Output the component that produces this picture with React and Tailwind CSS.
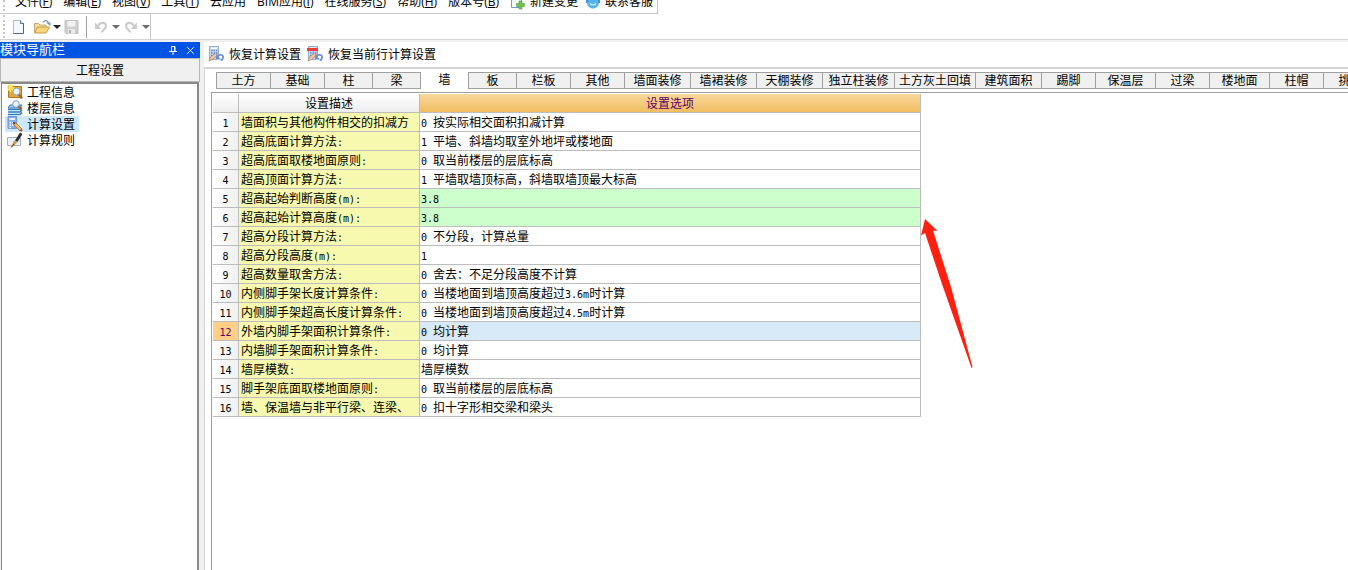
import { useState } from 'react';

const MENUS = [
  ['文件', 'F'],
  ['编辑', 'E'],
  ['视图', 'V'],
  ['工具', 'T'],
  ['云应用'],
  ['BIM应用', 'I'],
  ['在线服务', 'S'],
  ['帮助', 'H'],
  ['版本号', 'B'],
];

const TABS = [
  { name: '土方', width: 'w-[55px]' },
  { name: '基础', width: 'w-[54px]' },
  { name: '柱', width: 'w-[48px]' },
  { name: '梁', width: 'w-[48px]' },
  { name: '墙', width: 'w-[48px]' },
  { name: '板', width: 'w-[48px]' },
  { name: '栏板', width: 'w-[54px]' },
  { name: '其他', width: 'w-[54px]' },
  { name: '墙面装修', width: 'w-[66px]' },
  { name: '墙裙装修', width: 'w-[66px]' },
  { name: '天棚装修', width: 'w-[66px]' },
  { name: '独立柱装修', width: 'w-[72px]' },
  { name: '土方灰土回填', width: 'w-[81px]' },
  { name: '建筑面积', width: 'w-[66px]' },
  { name: '踢脚', width: 'w-[54px]' },
  { name: '保温层', width: 'w-[60px]' },
  { name: '过梁', width: 'w-[54px]' },
  { name: '楼地面', width: 'w-[60px]' },
  { name: '柱帽', width: 'w-[54px]' },
  { name: '挑檐', width: 'w-[54px]' },
];

const ROWS = [
  ['墙面积与其他构件相交的扣减方', '0 按实际相交面积扣减计算'],
  ['超高底面计算方法:', '1 平墙、斜墙均取室外地坪或楼地面'],
  ['超高底面取楼地面原则:', '0 取当前楼层的层底标高'],
  ['超高顶面计算方法:', '1 平墙取墙顶标高，斜墙取墙顶最大标高'],
  ['超高起始判断高度(m):', '3.8'],
  ['超高起始计算高度(m):', '3.8'],
  ['超高分段计算方法:', '0 不分段，计算总量'],
  ['超高分段高度(m):', '1'],
  ['超高数量取舍方法:', '0 舍去：不足分段高度不计算'],
  ['内侧脚手架长度计算条件:', '0 当楼地面到墙顶高度超过3.6m时计算'],
  ['内侧脚手架超高长度计算条件:', '0 当楼地面到墙顶高度超过4.5m时计算'],
  ['外墙内脚手架面积计算条件:', '0 均计算'],
  ['内墙脚手架面积计算条件:', '0 均计算'],
  ['墙厚模数:', '墙厚模数'],
  ['脚手架底面取楼地面原则:', '0 取当前楼层的层底标高'],
  ['墙、保温墙与非平行梁、连梁、', '0 扣十字形相交梁和梁头'],
];

// Latin characters take half the width of a Chinese one
function GridText({ text }) {
  return text.split(/([\x20-\x7e]+)/).map((part, i) =>
    i % 2 ? (
      <span key={i} className="font-['DejaVu_Sans_Mono',monospace] text-[10px] leading-none whitespace-pre">
        {part}
      </span>
    ) : (
      part
    )
  );
}

function NewIcon() {
  return (
    <svg width="13" height="16" viewBox="0 0 13 16">
      <path d="M1.500 1.500h7l3 3v10h-10z" fill="#f3f8fd" stroke="#a9bbd0" />
      <path d="M11.500 4v10.500h-10" fill="none" stroke="#4a6488" />
      <path d="M8.500 1.500v3h3" fill="#d6e2f0" stroke="#5d7590" />
    </svg>
  );
}

function OpenIcon() {
  return (
    <svg width="18" height="16" viewBox="0 0 18 16">
      <path d="M1.500 13.500v-9h4l1.500 1.500h6v3" fill="#f3dca4" stroke="#c8ab6c" />
      <path d="M1.500 14l3-6h12l-3.500 6z" fill="#fbd57c" stroke="#c79a45" />
      <path d="M10 3.500c1.500-2.500 4.500-2.500 5.500.5" fill="none" stroke="#7d96b8" strokeWidth="1.300" />
      <path d="M13 3.500h4.500V7z" fill="#7d96b8" />
    </svg>
  );
}

function SaveIcon() {
  return (
    <svg width="15" height="16" viewBox="0 0 15 16">
      <path d="M1 1.500h13v13H2l-1-1z" fill="#cecece" stroke="#c2c2c2" />
      <path d="M3.500 2h8v5.500h-8z" fill="#f2f2f2" />
      <path d="M4 10h7v4.500H4z" fill="#ececec" />
      <path d="M5 11h2v3H5z" fill="#b0b0b0" />
    </svg>
  );
}

function UndoIcon({ flip }) {
  return (
    <svg width="14" height="14" viewBox="0 0 14 14" className={flip ? '-scale-x-100' : ''}>
      <path d="M4 6c2-4.500 8-4 8 0 0 2.500-3 3.500-4.500 6.500" fill="none" stroke="#cdcdcd" strokeWidth="2.200" />
      <path d="M1 2.500v6.500h6.500z" fill="#cdcdcd" />
    </svg>
  );
}

function Caret({ color }) {
  return (
    <svg width="8" height="4" viewBox="0 0 8 4">
      <path d="M0 0h8L4 4z" fill={color} />
    </svg>
  );
}

function ChangeIcon() {
  return (
    <svg width="16" height="16" viewBox="0 0 16 16">
      <path d="M1.500 1.500h10v12h-10z" fill="#f4f9ff" stroke="#6d9bd0" />
      <path d="M9 7h3v2.500h2.500v3H12V15H9v-2.500H6.500v-3H9z" fill="#72bf52" stroke="#55a03c" strokeWidth=".6" />
    </svg>
  );
}

function ServiceIcon() {
  return (
    <svg width="16" height="16" viewBox="0 0 16 16">
      <path d="M2 5h12v4c0 3-3 5.500-6 5.500S2 12 2 9z" fill="#55b4ee" />
      <path d="M1 5h2v4H1zM13 5h2v4h-2z" fill="#3b97da" />
      <path d="M5 9.500c1.500 2 4.500 2 6 0" fill="none" stroke="#fff" strokeWidth="1.200" />
    </svg>
  );
}

function RestoreIcon({ row }) {
  return (
    <svg width="17" height="16" viewBox="0 0 17 16">
      <path d="M1.500.5h9v11l-2 2h-7z" fill="#c6dbf6" stroke="#93acd0" />
      <path d="M3 4.500h1.500M5.500 4.500H7M8 4.500h1.500M3 7h1.500M5.500 7H7M8 7h1.500M3 9.500h1.500" stroke="#6286c8" strokeWidth="1.500" />
      <path d="M3 1.500h6v1.500H3z" fill="#fff" />
      {row && <path d="M0 2h11v3H0z" fill="#f03c3c" />}
      <path d="M1 15l1.500-4 5-4 2 2-5 4.500z" fill="#f3c79a" stroke="#a07a6c" strokeWidth=".7" />
      <path d="M9.500 10.500c2.500-3 6.500-1.500 5.500 1.500-.5 1.500-1.500 1.500-1.500 3" fill="none" stroke="#6b90d0" strokeWidth="1.800" />
      <path d="M8 8v5.500h5z" fill="#6b90d0" />
    </svg>
  );
}

function ProjectIcon() {
  return (
    <svg width="16" height="16" viewBox="0 0 16 16">
      <path d="M1.500 2.500h13v11h-13z" fill="#e0a840" stroke="#b07a24" />
      <path d="M3.500 0v8M0 4h7.500M1 1l5.500 5.500M6.500 1L1 6.500" stroke="#ffe25e" strokeWidth="1.500" />
      <circle cx="9.500" cy="7.500" r="3.500" fill="#e8f3ff" stroke="#8aa4c4" />
      <path d="M12 10.500l3 4" stroke="#b0602c" strokeWidth="2.400" />
    </svg>
  );
}

function FloorIcon() {
  return (
    <svg width="16" height="16" viewBox="0 0 16 16">
      <path d="M3 5h12l-2 3H1z" fill="#9fd0f4" stroke="#2a7cc0" />
      <path d="M1 9.500h12l2-2M1 12h12l2-2M1 14.500h12l2-2" fill="none" stroke="#2a7cc0" strokeWidth="1.500" />
      <circle cx="9" cy="4" r="3.300" fill="#e8f3ff" stroke="#8a9cb4" />
      <path d="M11.500 6.500l3 3" stroke="#b0602c" strokeWidth="2.200" />
    </svg>
  );
}

function CalcIcon() {
  return (
    <svg width="16" height="16" viewBox="0 0 16 16">
      <path d="M1 .5h8.500v12H1z" fill="#86aee8" stroke="#7296d0" />
      <path d="M2.500 2H8v2H2.500z" fill="#e8f2ff" />
      <path d="M2.500 6.500H4M5 6.500h1.500M2.500 9H4M5 9h1.500M2.500 11.500H4" stroke="#fff" strokeWidth="1.500" />
      <path d="M6 6l3 1 6 6-2 2-6-6z" fill="#f3bd62" stroke="#8f6438" strokeWidth=".7" />
      <path d="M6 6l2.500 1L7 8.500z" fill="#333" />
      <path d="M13.500 15l1.500-1.500" stroke="#bd3c37" strokeWidth="2" />
    </svg>
  );
}

function RuleIcon() {
  return (
    <svg width="16" height="16" viewBox="0 0 16 16">
      <path d="M.5 5.500h13v8H.5z" fill="#e9eff8" stroke="#a3b1c6" />
      <path d="M8 8.500l5-8 2.500 1.500-5 8z" fill="#2e2e2e" />
      <path d="M7 8.500l3 2-3 3.500-3 1.500z" fill="#d09a38" />
      <path d="M4 15.500l3-3.500" stroke="#5c4020" />
    </svg>
  );
}

const NAV = [
  { name: '工程信息', Icon: ProjectIcon },
  { name: '楼层信息', Icon: FloorIcon },
  { name: '计算设置', Icon: CalcIcon },
  { name: '计算规则', Icon: RuleIcon },
];

function Grip() {
  return <div className="w-[2px] self-stretch border-l-2 border-dotted border-[#c4c4c4]" />;
}

function MenuBar() {
  return (
    <div className="flex">
      <nav className="flex h-[14px] items-end gap-[11px] overflow-hidden border-r border-b border-[#c8c8c8] pr-1 pb-[2px] pl-[3px] font-['Open_Sans','Noto_Sans_CJK_SC',sans-serif] text-xs leading-[18px]">
        <div className="-mr-px flex self-stretch">
          <Grip />
        </div>
        {MENUS.map(([name, key]) => (
          <button key={name} className="whitespace-nowrap">
            {name}
            {key && (
              <>
                (<u>{key}</u>)
              </>
            )}
          </button>
        ))}
        <button className="flex items-center gap-1 whitespace-nowrap">
          <ChangeIcon />
          新建变更
        </button>
        <button className="-ml-1 flex items-center gap-1 whitespace-nowrap">
          <ServiceIcon />
          联系客服
        </button>
      </nav>
    </div>
  );
}

function ToolBar() {
  return (
    <div className="flex h-[26px] border-b border-[#d4d4d4]">
      <div className="flex items-center border-r border-[#c8c8c8] py-px pl-[3px]">
        <Grip />
        <button aria-label="新建" className="ml-[7px]">
          <NewIcon />
        </button>
        <button aria-label="打开" className="ml-2 flex items-center gap-[2px]">
          <OpenIcon />
          <Caret color="#222" />
        </button>
        <button aria-label="保存" className="ml-[3px]">
          <SaveIcon />
        </button>
        <div className="ml-[7px] h-[22px] w-px bg-[#a0a0a0]" />
        <button aria-label="撤销" className="ml-[7px] flex items-center gap-1">
          <UndoIcon />
          <Caret color="#6b6b6b" />
        </button>
        <button aria-label="恢复" className="ml-1 flex items-center gap-1">
          <UndoIcon flip />
          <Caret color="#6b6b6b" />
        </button>
      </div>
    </div>
  );
}

function Sidebar() {
  const [active, setActive] = useState('计算设置');

  return (
    <aside className="flex w-[200px] shrink-0 flex-col">
      <div className="flex h-4 items-center bg-[#0054e3] text-[13px] leading-4 text-white">
        <h2 className="flex-1 pb-[2px]">模块导航栏</h2>
        <button aria-label="固定" className="mr-2">
          <svg width="10" height="10" viewBox="0 0 10 10">
            <path d="M3.500 6V1.500h3.500V6M1 6.500h8M5 7v3M6.500 1v5" fill="none" stroke="#fff" />
          </svg>
        </button>
        <button aria-label="关闭" className="mr-[5px]">
          <svg width="9" height="9" viewBox="0 0 9 9">
            <path d="M1 1l7 7M8 1L1 8" stroke="#fff" />
          </svg>
        </button>
      </div>
      <button className="h-6 border border-[#b8b8b8] bg-[#f0f0f0] text-center leading-[22px]">工程设置</button>
      <ul className="mx-px flex-1 border-t-2 border-r-2 border-l border-[#898989] bg-white pl-[3px]">
        {NAV.map(({ name, Icon }) => (
          <li key={name}>
            <button
              onClick={() => setActive(name)}
              className={`flex h-4 items-center gap-1 pr-1 pl-[2px] ${active === name ? 'bg-[#cce8ff]' : ''}`}
            >
              <Icon />
              {name}
            </button>
          </li>
        ))}
      </ul>
    </aside>
  );
}

function SettingsTable() {
  return (
    <table className="w-[708px] table-fixed border-separate border-spacing-0 leading-[14px]">
      <colgroup>
        <col className="w-[26px]" />
        <col className="w-[181px]" />
        <col />
      </colgroup>
      <thead>
        <tr className="h-[19px] bg-linear-to-b from-white to-[#ececec]">
          <th className="border-r border-b border-[#bdbdbd] p-0" />
          <th className="border-r border-b border-[#bdbdbd] p-0 font-normal">设置描述</th>
          <th className="border-r border-b border-[#bdbdbd] bg-linear-to-b from-[#f9d89c] to-[#f0bd5e] p-0 font-normal text-[#5b0068]">
            设置选项
          </th>
        </tr>
      </thead>
      <tbody>
        {ROWS.map(([label, value], i) => {
          const current = i === 11;
          const changed = i === 4 || i === 5;
          return (
            <tr key={i} className="h-[19px]">
              <th
                scope="row"
                className={`border-r border-b border-[#bdbdbd] p-0 font-normal ${
                  current ? 'bg-[#ffcf87] text-[#5b0068]' : 'bg-linear-to-r from-white to-[#f0f0f0]'
                }`}
              >
                <GridText text={String(i + 1)} />
              </th>
              <td className="border-r border-b border-[#bdbdbd] bg-[#f7faae] p-0 pl-[2px] whitespace-nowrap">
                <GridText text={label} />
              </td>
              <td
                className={`border-r border-b border-[#bdbdbd] p-0 pl-px whitespace-nowrap ${
                  current ? 'bg-[#d8e9f8]' : changed ? 'bg-[#ccffcc]' : 'bg-white'
                }`}
              >
                <GridText text={value} />
              </td>
            </tr>
          );
        })}
      </tbody>
    </table>
  );
}

function Arrow() {
  return (
    <svg width="52" height="152" viewBox="0 0 52 152" className="pointer-events-none absolute top-[124px] left-[709px]">
      <path d="M4 2L16.500 14l-4.500-.5L30 70l21.500 80-1 1L21 67 4 16l-4 2.500z" fill="#ff2010" />
    </svg>
  );
}

export default function App() {
  const [tab, setTab] = useState('墙');

  return (
    <div className="flex h-screen flex-col overflow-hidden bg-white font-['Noto_Sans_CJK_SC',sans-serif] text-xs leading-[18px] text-black">
      <MenuBar />
      <ToolBar />
      <div className="flex min-h-0 flex-1 bg-[#f0f0f0] pt-[2px]">
        <Sidebar />
        <main className="ml-1 flex min-w-0 flex-1 flex-col bg-white">
          <div className="flex h-[27px] shrink-0 items-center gap-[6px] border-b-2 border-[#d4d4d4] pb-px pl-1">
            <button className="flex items-center gap-1">
              <RestoreIcon />
              恢复计算设置
            </button>
            <button className="flex items-center gap-1">
              <RestoreIcon row />
              恢复当前行计算设置
            </button>
          </div>
          <div className="flex min-h-0 flex-1 flex-col border-l border-[#d4d4d4] pt-[3px] pl-[6px]">
            <div role="tablist" className="ml-[5px] flex overflow-hidden">
              {TABS.map(({ name, width }, i) => (
                <button
                  key={name}
                  role="tab"
                  aria-selected={tab === name}
                  onClick={() => setTab(name)}
                  className={`h-[17px] shrink-0 border-r border-[#a0a0a0] text-center leading-[13px] whitespace-nowrap ${width} ${
                    i === 0 ? 'border-l' : ''
                  } ${tab === name ? 'bg-white pb-1' : 'border-y bg-[#f0f0f0] pb-[2px]'}`}
                >
                  {name}
                </button>
              ))}
            </div>
            <div className="relative mt-[3px] min-h-0 flex-1 border-t border-l border-[#a0a0a0] pt-px pl-px">
              <SettingsTable />
              <Arrow />
            </div>
          </div>
        </main>
      </div>
    </div>
  );
}
